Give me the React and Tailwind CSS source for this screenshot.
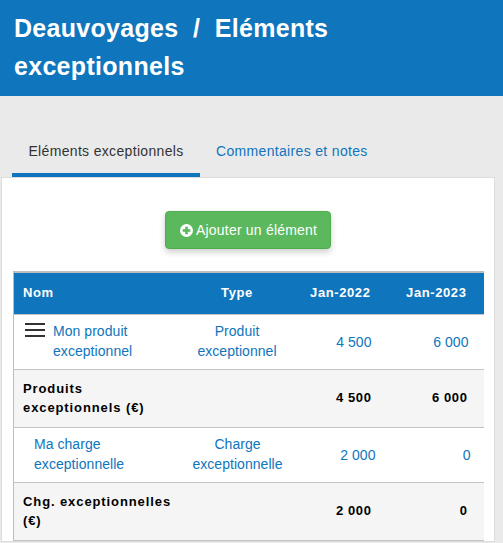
import React from 'react';

const font = { fontFamily: '"Liberation Sans", Arial, sans-serif' };

function PlusCircle() {
  return (
    <svg width="13" height="13" viewBox="0 0 13 13" className="shrink-0">
      <circle cx="6.5" cy="6.5" r="6.5" fill="#fff" />
      <rect x="2.7" y="5.2" width="7.6" height="2.6" fill="#5cb85c" />
      <rect x="5.2" y="2.7" width="2.6" height="7.6" fill="#5cb85c" />
    </svg>
  );
}

function Burger() {
  return (
    <span className="flex flex-col gap-[4px] w-[20px] shrink-0 ml-[2px] mt-[2px] mr-[8px]">
      <span className="block h-[2px] bg-[#333]" />
      <span className="block h-[2px] bg-[#333]" />
      <span className="block h-[2px] bg-[#333]" />
    </span>
  );
}

function DataRow({ name, type, a, b, burger, nameClass, typeClass, aClass, bClass }) {
  return (
    <tr className="bg-white border-b border-[#c4c4c4] text-[14px] leading-[20px] text-[#0f75bc] tracking-[0.05px]">
      <td className={`pt-[6px] pb-[8px] align-top ${nameClass}`}>
        <div className="flex">
          {burger && <Burger />}
          <span>{name}</span>
        </div>
      </td>
      <td className={`text-center pt-[6px] pb-[8px] ${typeClass}`}>{type}</td>
      <td className={`text-right ${aClass}`}>{a}</td>
      <td className={`text-right ${bClass}`}>{b}</td>
    </tr>
  );
}

function TotalRow({ name, a, b }) {
  return (
    <tr className="bg-[#f5f5f5] border-b border-[#c4c4c4] text-[13px] leading-[19.5px] font-bold text-black">
      <td className="pl-[9px] pt-[9px] pb-[9px] tracking-[0.9px] whitespace-nowrap">{name}</td>
      <td />
      <td className="text-right pr-[16px] tracking-[0.6px]">{a}</td>
      <td className="text-right pr-[16px] tracking-[0.6px]">{b}</td>
    </tr>
  );
}

export default function App() {
  return (
    <div className="h-[543px] overflow-hidden bg-[#eaeaea]" style={font}>
      <header className="h-[96px] bg-[#0f75bc] px-[14px] pt-[10px]">
        <h1 className="text-[25px] leading-[37.5px] font-bold text-white tracking-[0.3px]">
          Deauvoyages&nbsp;&nbsp;/&nbsp;&nbsp;Eléments exceptionnels
        </h1>
      </header>

      <nav className="flex pl-[12px] pt-[35px] h-[81px] text-[14px] leading-[20px] tracking-[0.33px]">
        <div className="w-[188px] h-[46px] pt-[10px] text-center border-b-4 border-[#0f75bc] text-[#333]">
          Eléments exceptionnels
        </div>
        <div className="pl-[16px] pt-[10px] text-[#0f75bc]">Commentaires et notes</div>
      </nav>

      <section className="ml-[1px] w-[494px] bg-white border border-[#dddddd] px-[11px] pt-[33px]">
        <div className="flex justify-center">
          <button className="flex items-center gap-[3px] w-[166px] h-[38px] pl-[14px] bg-[#5cb85c] border border-[#4cae4c] rounded-[4px] text-white text-[14px] tracking-[0.2px] shadow-[0_3px_6px_rgba(0,0,0,0.2)]">
            <PlusCircle />
            Ajouter un élément
          </button>
        </div>

        <table className="mt-[22px] w-[470px] table-fixed border-collapse border-t-2 border-l border-[#bdbdbd]">
          <colgroup>
            <col className="w-[157px]" />
            <col className="w-[133px]" />
            <col className="w-[84px]" />
            <col className="w-[96px]" />
          </colgroup>
          <thead>
            <tr className="h-[42px] bg-[#0f75bc] text-white text-[13px] font-bold tracking-[0.6px] border-b border-[#c4c4c4]">
              <th className="pl-[9px] pb-[2px] text-left">Nom</th>
              <th className="pb-[2px] text-center">Type</th>
              <th className="pb-[2px] text-right pr-[17px]">Jan-2022</th>
              <th className="pb-[2px] text-right pr-[17px]">Jan-2023</th>
            </tr>
          </thead>
          <tbody>
            <DataRow
              burger
              name={<>Mon produit<br />exceptionnel</>}
              type={<>Produit<br />exceptionnel</>}
              nameClass="pl-[9px]"
              a="4 500"
              b="6 000"
              aClass="pr-[16px]"
              bClass="pr-[15px]"
            />
            <TotalRow name={<>Produits<br />exceptionnels (€)</>} a="4 500" b="6 000" />
            <DataRow
              name={<>Ma charge<br />exceptionnelle</>}
              type={<>Charge<br />exceptionnelle</>}
              nameClass="pl-[20px]"
              typeClass="pl-[1px]"
              a="2 000"
              b="0"
              aClass="pr-[12px]"
              bClass="pr-[13px]"
            />
            <TotalRow name={<>Chg. exceptionnelles<br />(€)</>} a="2 000" b="0" />
          </tbody>
        </table>
      </section>
    </div>
  );
}
